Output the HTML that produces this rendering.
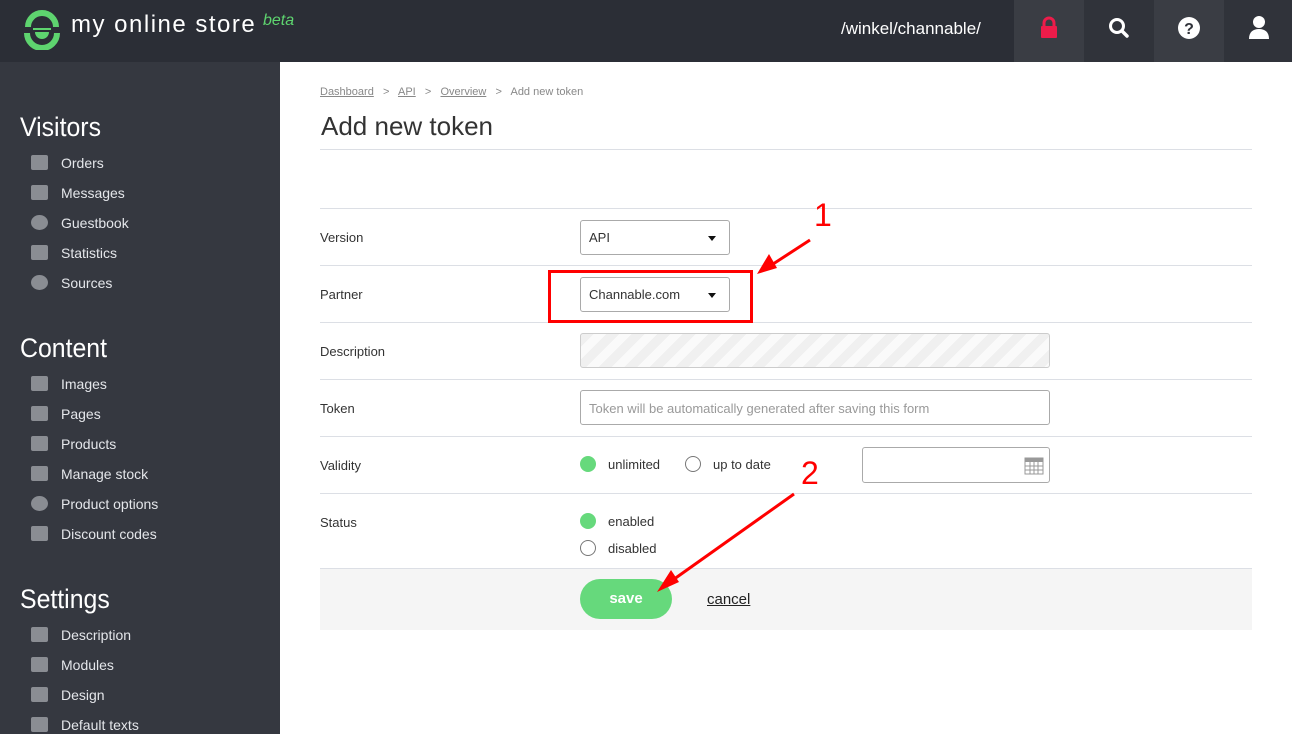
<!DOCTYPE html>
<html><head><style>
body{margin:0;width:1292px;height:734px;overflow:hidden;font-family:"Liberation Sans",sans-serif;background:#fff;position:relative}
.hdr{position:absolute;left:0;top:0;width:1292px;height:62px;background:#2b2e36}
.side{position:absolute;left:0;top:62px;width:280px;height:672px;background:#353840}
.a{position:absolute}
.h{position:absolute;left:20px;color:#fff;font-size:27px;font-family:"Liberation Sans Narrow","Liberation Sans",sans-serif;transform:scaleX(.92);transform-origin:left}
.it{position:absolute;left:61px;color:#e4e6ea;font-size:14px}
.ic{position:absolute;left:31px;width:17px;height:15px;background:#8a8d93;border-radius:2px}
.hb{position:absolute;top:0;width:70px;height:62px}
.line{position:absolute;left:320px;width:932px;height:1px;background:#dcdfe5}
.lbl{position:absolute;left:320px;font-size:13px;color:#333}
.sel{position:absolute;left:580px;border:1px solid #aaa;border-radius:3px;font-size:13px;color:#333;box-sizing:border-box;width:150px;height:35px;line-height:33px;padding-left:8px}
.sel:after{content:"";position:absolute;right:13px;top:15px;border:4px solid transparent;border-top:5px solid #111}
.rad{position:absolute;width:16px;height:16px;border-radius:50%;box-sizing:border-box}
.on{background:#66d97c}.off{border:1.5px solid #777}
.rt{position:absolute;font-size:13px;color:#333}
</style></head><body>
<div class="hdr"></div>
<svg class="a" style="left:22px;top:10px" width="40" height="40" viewBox="0 0 40 40">
<path d="M6 17 A14 14 0 0 1 34 17" fill="none" stroke="#5ed46f" stroke-width="6"/>
<path d="M5 23 A15 15 0 0 0 35 23" fill="none" stroke="#5ed46f" stroke-width="6"/>
<path d="M11 19h18" stroke="#5ed46f" stroke-width="2"/>
<path d="M13 22 A7 7 0 0 0 27 22 Z" fill="#5ed46f"/></svg>
<div class="a" style="left:71px;top:11px;color:#fff;font-size:24px;letter-spacing:1.5px">my online store</div>
<div class="a" style="left:263px;top:12px;color:#5ed46f;font-size:16px;font-style:italic">beta</div>
<div class="a" style="left:841px;top:19px;color:#fff;font-size:17px">/winkel/channable/</div>
<div class="hb" style="left:1014px;background:#3a3d44"></div>
<div class="hb" style="left:1084px;background:#30333a"></div>
<div class="hb" style="left:1154px;background:#3a3d44"></div>
<div class="hb" style="left:1224px;background:#30333a;width:68px"></div>
<svg class="a" style="left:1039px;top:16px" width="20" height="24"><path d="M5 11V7a5 5 0 0 1 10 0v4" fill="none" stroke="#ec1c4a" stroke-width="3"/><rect x="2" y="10" width="16" height="12" rx="1" fill="#ec1c4a"/></svg>
<svg class="a" style="left:1107px;top:16px" width="24" height="24"><circle cx="10" cy="10" r="6.5" fill="none" stroke="#fff" stroke-width="3"/><path d="M15 15l5 5" stroke="#fff" stroke-width="3.5" stroke-linecap="round"/></svg>
<svg class="a" style="left:1177px;top:16px" width="24" height="24"><circle cx="12" cy="12" r="11" fill="#fff"/><text x="12" y="18" text-anchor="middle" font-size="16" font-weight="bold" fill="#30333a" font-family="Liberation Sans">?</text></svg>
<svg class="a" style="left:1247px;top:15px" width="24" height="26"><circle cx="12" cy="7" r="6" fill="#fff"/><path d="M2 24c0-7 4-10 10-10s10 3 10 10z" fill="#fff"/></svg>
<div class="side"></div>
<div class="h" style="top:112px">Visitors</div>
<div class="ic" style="top:155px"></div><div class="it" style="top:155px">Orders</div>
<div class="ic" style="top:185px"></div><div class="it" style="top:185px">Messages</div>
<div class="ic" style="top:215px;border-radius:50%"></div><div class="it" style="top:215px">Guestbook</div>
<div class="ic" style="top:245px"></div><div class="it" style="top:245px">Statistics</div>
<div class="ic" style="top:275px;border-radius:50%"></div><div class="it" style="top:275px">Sources</div>
<div class="h" style="top:333px">Content</div>
<div class="ic" style="top:376px"></div><div class="it" style="top:376px">Images</div>
<div class="ic" style="top:406px"></div><div class="it" style="top:406px">Pages</div>
<div class="ic" style="top:436px"></div><div class="it" style="top:436px">Products</div>
<div class="ic" style="top:466px"></div><div class="it" style="top:466px">Manage stock</div>
<div class="ic" style="top:496px;border-radius:50%"></div><div class="it" style="top:496px">Product options</div>
<div class="ic" style="top:526px"></div><div class="it" style="top:526px">Discount codes</div>
<div class="h" style="top:584px">Settings</div>
<div class="ic" style="top:627px"></div><div class="it" style="top:627px">Description</div>
<div class="ic" style="top:657px"></div><div class="it" style="top:657px">Modules</div>
<div class="ic" style="top:687px"></div><div class="it" style="top:687px">Design</div>
<div class="ic" style="top:717px"></div><div class="it" style="top:717px">Default texts</div>

<div class="a" style="left:320px;top:86px;font-size:11px;color:#888"><u>Dashboard</u> &nbsp;&nbsp;&gt;&nbsp;&nbsp; <u>API</u> &nbsp;&nbsp;&gt;&nbsp;&nbsp; <u>Overview</u> &nbsp;&nbsp;&gt;&nbsp;&nbsp; Add new token</div>
<div class="a" style="left:321px;top:111px;font-size:26px;color:#333">Add new token</div>
<div class="line" style="top:149px"></div>
<div class="line" style="top:208px"></div>
<div class="line" style="top:265px"></div>
<div class="line" style="top:322px"></div>
<div class="line" style="top:379px"></div>
<div class="line" style="top:436px"></div>
<div class="line" style="top:493px"></div>
<div class="a" style="left:320px;top:568px;width:932px;height:61px;background:#f5f5f5;border-top:1px solid #dcdfe5"></div>
<div class="lbl" style="top:230px">Version</div>
<div class="lbl" style="top:287px">Partner</div>
<div class="lbl" style="top:344px">Description</div>
<div class="lbl" style="top:401px">Token</div>
<div class="lbl" style="top:458px">Validity</div>
<div class="lbl" style="top:515px">Status</div>
<div class="sel" style="top:220px">API</div>
<div class="sel" style="top:277px">Channable.com</div>
<div class="a" style="left:548px;top:270px;border:3px solid #f00;box-sizing:border-box;width:205px;height:53px"></div>
<div class="a" style="left:580px;top:333px;width:470px;height:35px;box-sizing:border-box;border:1px solid #ccc;border-radius:3px;background:repeating-linear-gradient(135deg,#f0f0f0 0 9px,#fafafa 9px 18px)"></div>
<div class="a" style="left:580px;top:390px;width:470px;height:35px;box-sizing:border-box;border:1px solid #aaa;border-radius:3px;font-size:13px;color:#999;line-height:35px;padding-left:8px">Token will be automatically generated after saving this form</div>
<div class="rad on" style="left:580px;top:456px"></div><div class="rt" style="left:608px;top:457px">unlimited</div>
<div class="rad off" style="left:685px;top:456px"></div><div class="rt" style="left:713px;top:457px">up to date</div>
<div class="a" style="left:862px;top:447px;width:188px;height:36px;box-sizing:border-box;border:1px solid #aaa;border-radius:3px"></div>
<svg class="a" style="left:1024px;top:455px" width="20" height="20"><rect x="1" y="3" width="18" height="16" fill="#fff" stroke="#999"/><rect x="1" y="3" width="18" height="4" fill="#999"/><path d="M1 11h18M1 15h18M6 7v12M10 7v12M14 7v12" stroke="#999"/></svg>
<div class="rad on" style="left:580px;top:513px"></div><div class="rt" style="left:608px;top:514px">enabled</div>
<div class="rad off" style="left:580px;top:540px"></div><div class="rt" style="left:608px;top:541px">disabled</div>
<div class="a" style="left:580px;top:579px;width:92px;height:40px;border-radius:20px;background:#66d97c;color:#fff;font-size:15px;font-weight:bold;text-align:center;line-height:40px">save</div>
<div class="a" style="left:707px;top:591px;font-size:15px;color:#222;text-decoration:underline">cancel</div>
<div class="a" style="left:814px;top:197px;font-size:32px;color:#f00">1</div>
<div class="a" style="left:801px;top:455px;font-size:32px;color:#f00">2</div>
<svg class="a" style="left:0;top:0" width="1292" height="734">
<path d="M810 240L770 266" stroke="#f00" stroke-width="3"/><path d="M757 274l12-20 8 14z" fill="#f00"/>
<path d="M794 494L670 582" stroke="#f00" stroke-width="3"/><path d="M657 592l14-22 8 12z" fill="#f00"/>
</svg>
</body></html>
